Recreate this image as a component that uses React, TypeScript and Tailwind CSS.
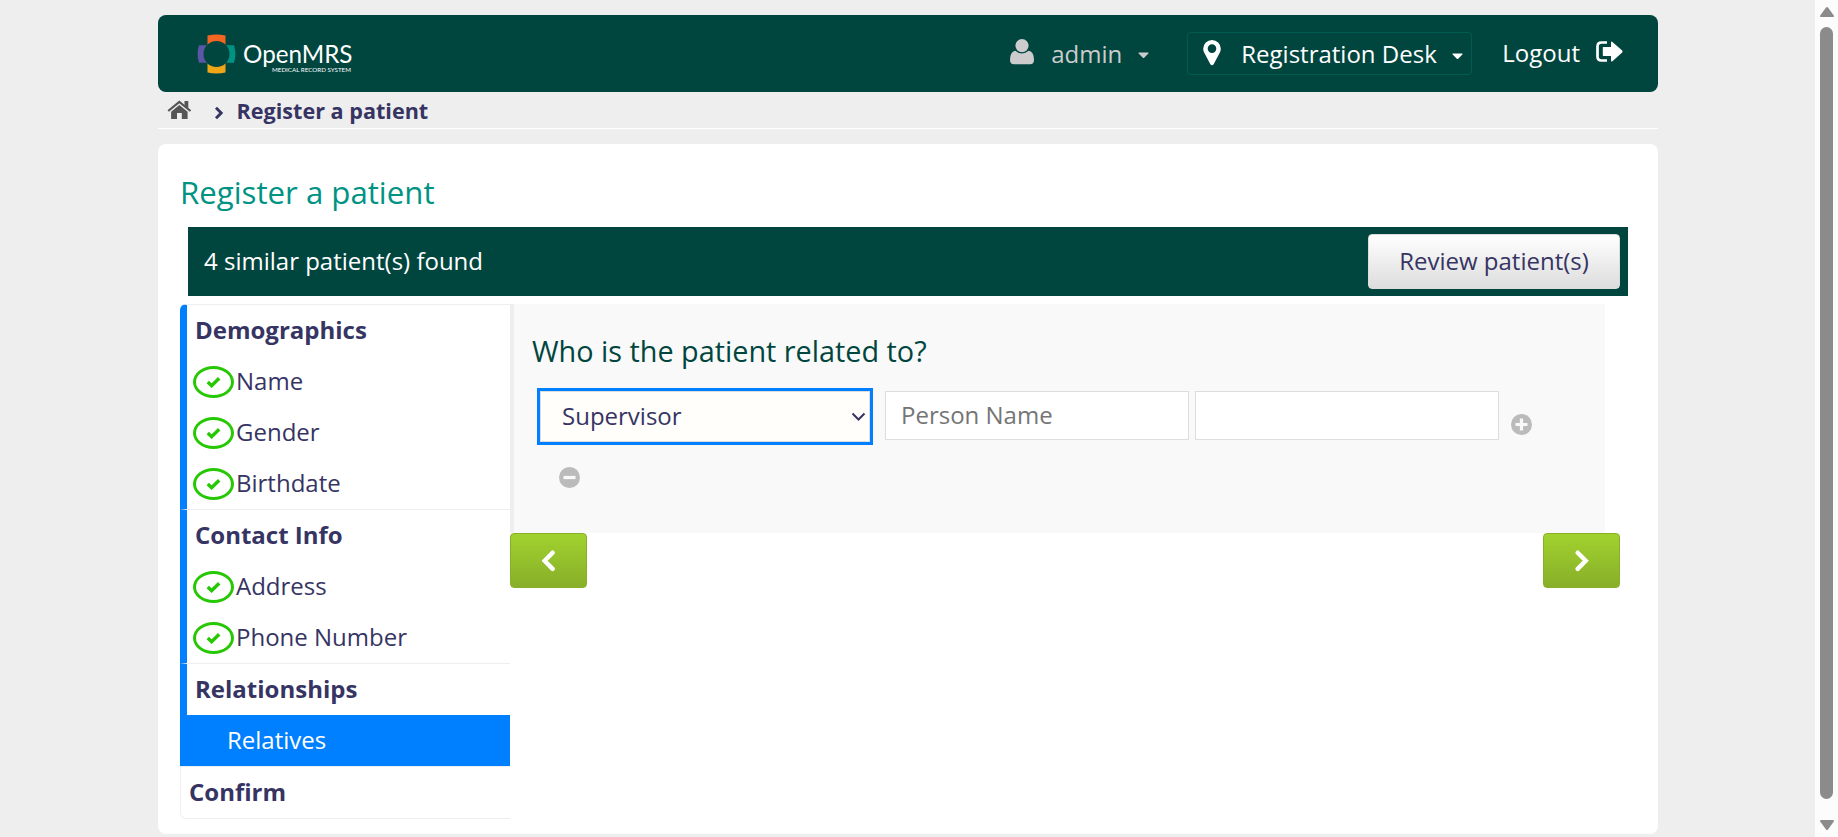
import React from "react";

const sections = [
  { title: "Demographics", items: ["Name", "Gender", "Birthdate"] },
  { title: "Contact Info", items: ["Address", "Phone Number"] },
];

function Logo() {
  return (
    <svg width="156" height="42" viewBox="0 0 156 42" className="ml-[39px] mt-[18px]">
      <path d="M10.500 2.600Q19.500 .6 28.500 2.600V13H10.500Z" fill="#f26522" />
      <path d="M10.500 30H28.500V39.400Q19.500 41.400 10.500 39.400Z" fill="#eea616" />
      <path d="M2 12.200H12V29.800H2Q-.8 21 2 12.200Z" fill="#5b57a6" />
      <path d="M27 12.200H37Q39.800 21 37 29.800H27Z" fill="#009384" />
      <circle cx="19.500" cy="21" r="13" fill="#00463f" />
      <text x="46" y="30" fontSize="24.500" textLength="109.500" lengthAdjust="spacingAndGlyphs" fill="#fff" fontFamily="Lato, sans-serif">OpenMRS</text>
      <text x="75" y="39.200" fontSize="5.400" textLength="79" lengthAdjust="spacingAndGlyphs" fill="#fff" fontFamily="Lato, sans-serif">MEDICAL RECORD SYSTEM</text>
    </svg>
  );
}

function Caret({ className }: { className: string }) {
  return (
    <svg width="11" height="7" viewBox="0 0 11 7" className={className}>
      <path d="M1 .5H10Q11 .7 10.300 1.600L6.200 5.700Q5.500 6.300 4.800 5.700L.7 1.600Q0 .7 1 .5Z" fill="currentColor" />
    </svg>
  );
}

function Done() {
  return (
    <span className="flex h-8 w-[41px] items-center justify-center rounded-[50%] border-[3px] border-[#26c804]">
      <svg width="15" height="12" viewBox="0 0 15 12">
        <path d="M1.800 6L5.600 9.700L13.200 2.200" fill="none" stroke="#26c804" strokeWidth="3.400" />
      </svg>
    </span>
  );
}

function Chevron({ flip }: { flip?: boolean }) {
  return (
    <svg width="14" height="22" viewBox="0 0 14 22" className={flip ? "-scale-x-100" : ""}>
      <path d={flip ? "M11.300 2.700L3.300 10.800L11.300 18.900" : "M10.600 2.700L2.600 10.800L10.600 18.900"} fill="none" stroke="#fff" strokeWidth="4.400" strokeLinecap="round" />
    </svg>
  );
}

export default function App() {
  return (
    <div className="flex h-[837px] w-[1838px] overflow-hidden bg-[#eeeeee] font-['Open_Sans',sans-serif] text-2xl text-[#363463]">
      <div className="flex w-[1815px] flex-col pl-[158px] pr-[157px] pt-[15px]">
        <header className="flex h-[77px] shrink-0 items-start rounded-lg bg-[#00463f] text-white">
          <Logo />
          <div className="ml-auto flex items-start text-[#cccccc]">
            <svg width="24" height="26" viewBox="0 0 24 26" className="mt-6">
              <circle cx="12" cy="6.600" r="6.600" fill="currentColor" />
              <path d="M5.500 11.800Q8.400 14.400 12 14.400T18.500 11.800Q24 12.500 24 21Q24 25.200 20 25.200H4Q0 25.200 0 21Q0 12.500 5.500 11.800Z" fill="currentColor" />
            </svg>
            <span className="ml-[17px] mt-[23px] leading-8">admin</span>
            <Caret className="ml-4 mt-[37px]" />
          </div>
          <div className="ml-[38px] mt-[17px] flex h-[43px] w-[285px] items-start rounded border border-[#005c52]">
            <svg width="18" height="26" viewBox="0 0 18 26" className="ml-[15px] mt-[7px]">
              <path fillRule="evenodd" d="M9 0A8.800 8.800 0 0 1 17.800 8.800Q17.800 10.500 17 12.300L10.800 24Q10 25.300 9 25.300T7.200 24L1 12.300Q.2 10.500 .2 8.800A8.800 8.800 0 0 1 9 0ZM9 4.300A4.300 4.300 0 1 0 9 12.900A4.300 4.300 0 1 0 9 4.300Z" fill="#fff" />
            </svg>
            <span className="ml-5 mt-[5px] leading-8">Registration Desk</span>
            <Caret className="ml-auto mr-[8px] mt-5" />
          </div>
          <span className="ml-[30px] mt-[22px] leading-8">Logout</span>
          <svg width="27" height="22" viewBox="0 0 27 22" className="ml-4 mr-[35px] mt-[26px]">
            <path d="M11 1.500H5.500Q1.500 1.500 1.500 5.500V15.500Q1.500 19.500 5.500 19.500H11" fill="none" stroke="#fff" strokeWidth="2.700" />
            <path d="M7.500 6H15V1.600Q15 0 16.400 1L26.200 9.600Q27 10.500 26.200 11.400L16.400 20.300Q15 21 15 19.500V15H7.500Q6.800 15 6.800 14.300V6.700Q6.800 6 7.500 6Z" fill="#fff" />
          </svg>
        </header>

        <nav className="flex h-[37px] shrink-0 items-start border-b border-white">
          <svg width="25" height="20" viewBox="0 0 25 20" className="ml-[9px] mt-2">
            <path d="M1.200 11L12.300 1.900L23.500 11" fill="none" stroke="#555" strokeWidth="2.200" />
            <path d="M17.500 1H21.300V8.500L17.500 5.300Z" fill="#555" />
            <path d="M12.300 5L20.600 11.800V19H14.800V13H10V19H4.100V11.800Z" fill="#555" />
          </svg>
          <svg width="10" height="14" viewBox="0 0 10 14" className="ml-[22px] mt-3.5">
            <path d="M2 1.700L7.200 7L2 12.300" fill="none" stroke="#363463" strokeWidth="2.900" />
          </svg>
          <span className="ml-[12.500px] mt-1 text-[21.6px] font-bold leading-[30px]">Register a patient</span>
        </nav>

        <main className="mt-[15px] flex h-[690px] shrink-0 flex-col rounded-lg bg-white pl-[22px]">
          <h2 className="mt-[27px] h-14 text-[31.2px] leading-[42px] text-[#009384]">Register a patient</h2>
          <div className="ml-2 flex h-[69px] w-[1440px] items-center justify-between bg-[#00463f] pl-4 pr-2 text-white">
            <span className="pb-0.5">4 similar patient(s) found</span>
            <button className="h-[55px] w-[252px] rounded border border-[#dddddd] bg-linear-to-b from-white to-[#dddddd] pb-0.5 text-[#363463]">Review patient(s)</button>
          </div>

          <div className="mt-2 flex items-start">
            <ul className="w-[330px] rounded-l-md">
              {sections.map((s, i) => (
                <li key={s.title} className={i === 0 ? "overflow-hidden rounded-tl-md border-l-[7px] border-t border-l-[#007fff] border-t-[#eeeeee]" : "border-l-[7px] border-t border-l-[#007fff] border-t-[#eeeeee]"}>
                  <div className="h-[51px] pl-[8px] font-bold leading-[49px]">{s.title}</div>
                  {s.items.map((item) => (
                    <div key={item} className="flex h-[51px] items-center gap-[2px] pl-1.5">
                      <Done />
                      <span className="pb-0.5">{item}</span>
                    </div>
                  ))}
                </li>
              ))}
              <li>
                <div className="h-[52px] border-l-[7px] border-t border-l-[#007fff] border-t-[#eeeeee] pl-[8px] font-bold leading-[49px]">Relationships</div>
                <div className="h-[51px] bg-[#007fff] pl-[47px] leading-[49px] text-white">Relatives</div>
              </li>
              <li className="h-[53px] rounded-bl-md border-y border-l border-[#eeeeee] pl-2 font-bold leading-[49px]">Confirm</li>
            </ul>

            <div className="flex w-[1110px] flex-col">
              <section className="h-[229px] w-[1095px] border-l-4 border-[#eeeeee] bg-[#f9f9f9] pl-[18px]">
                <h3 className="pt-[27px] text-[28.8px] leading-[40px] text-[#00463f]">Who is the patient related to?</h3>
                <div className="mt-[17px] flex items-start">
                  <div className="ml-[5px] flex h-[57px] w-[336px] items-center border-[3px] border-[#007fff] bg-[#fffefa]">
                    <div className="flex h-full w-full items-center justify-between border border-[#dddddd] pl-[21px] pr-[3px]">
                      <span className="pb-0.5">Supervisor</span>
                      <svg width="15" height="10" viewBox="0 0 15 10"><path d="M1.500 1.500L7.500 7.500L13.500 1.500" fill="none" stroke="#363463" strokeWidth="2" /></svg>
                    </div>
                  </div>
                  <input placeholder="Person Name" className="ml-3 mt-[3px] h-[49px] w-[304px] border border-[#dddddd] bg-white pb-0.5 pl-[15px] placeholder:text-[#757575]" />
                  <input className="ml-1.5 mt-[3px] h-[49px] w-[304px] border border-[#dddddd] bg-white" />
                  <svg width="21" height="21" viewBox="0 0 21 21" className="ml-3 mt-[26px]">
                    <circle cx="10.500" cy="10.500" r="10.500" fill="#bbbbbb" />
                    <path d="M4.500 10.500H16.500M10.500 4.500V16.500" stroke="#f9f9f9" strokeWidth="3.200" />
                  </svg>
                </div>
                <svg width="21" height="21" viewBox="0 0 21 21" className="ml-[27px] mt-[22px]">
                  <circle cx="10.500" cy="10.500" r="10.500" fill="#bbbbbb" />
                  <path d="M4.500 10.500H16.500" stroke="#f9f9f9" strokeWidth="3.200" />
                </svg>
              </section>
              <div className="flex justify-between">
                <button className="flex h-[55px] w-[77px] items-center justify-center rounded border border-[#88af28] bg-linear-to-b from-[#a1d22f] to-[#88af28]"><Chevron /></button>
                <button className="flex h-[55px] w-[77px] items-center justify-center rounded border border-[#88af28] bg-linear-to-b from-[#a1d22f] to-[#88af28]"><Chevron flip /></button>
              </div>
            </div>
          </div>
        </main>
      </div>

      <div className="flex w-[23px] flex-col items-center bg-[#fcfcfc] pt-[7px]">
        <svg width="14" height="10" viewBox="0 0 14 10"><path d="M6 .6Q7 -.6 8 .6L13.800 8.500Q14.200 10 13 10H1Q-.2 10 .2 8.500Z" fill="#8b8b8b" /></svg>
        <div className="mt-2.5 h-[772px] w-[13px] rounded-full bg-[#8b8b8b]" />
        <svg width="14" height="10" viewBox="0 0 14 10" className="mt-[21px]"><path d="M6 9.400Q7 10.600 8 9.400L13.800 1.500Q14.200 0 13 0H1Q-.2 0 .2 1.500Z" fill="#8b8b8b" /></svg>
      </div>
    </div>
  );
}
